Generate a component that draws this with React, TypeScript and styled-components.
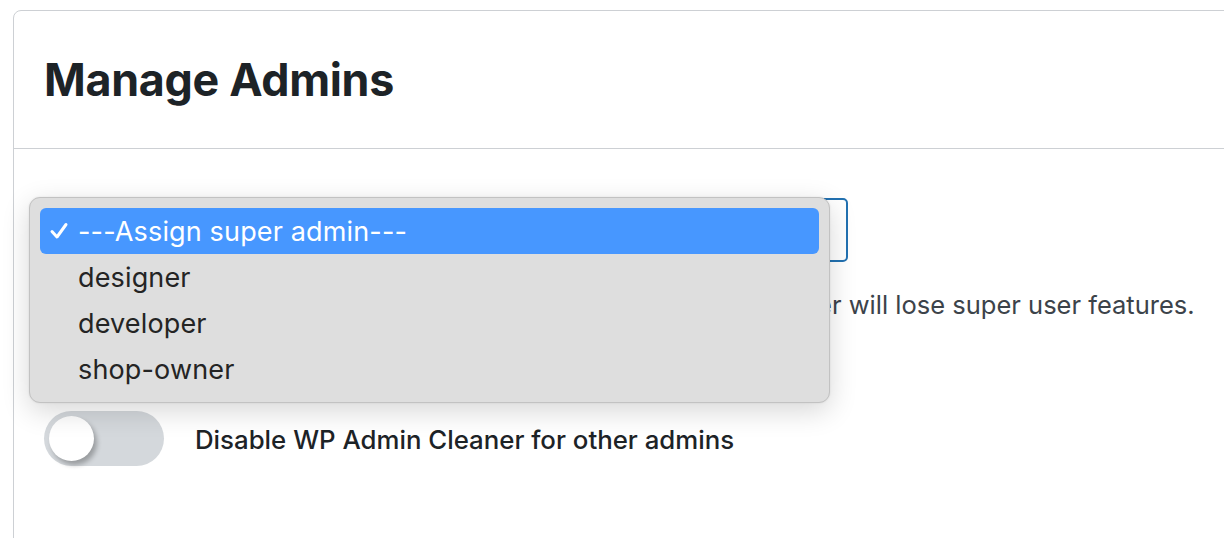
import React from "react";
import styled, { createGlobalStyle } from "styled-components";

const GlobalStyle = createGlobalStyle`
  html, body { margin: 0; padding: 0; background: #ffffff; }
  body { font-family: Inter, "Noto Sans", "Liberation Sans", sans-serif; overflow: hidden; }
  * { box-sizing: border-box; }
`;

const Page = styled.div`
  width: 1224px;
  height: 538px;
  padding: 10px 0 0 13px;
  overflow: hidden;
`;

const Card = styled.section`
  width: 1240px;
  min-height: 560px;
  border: 1.5px solid #cdd0d4;
  border-radius: 8px 0 0 0;
  background: #ffffff;
`;

const Header = styled.header`
  height: 138px;
  display: flex;
  align-items: center;
  padding: 0 0 0 30px;
  border-bottom: 1.5px solid #cdd0d4;
`;

const Title = styled.h1`
  margin: 0;
  font-size: 44.8px;
  font-weight: 700;
  color: #1d2327;
  letter-spacing: -0.3px;
`;

const Body = styled.div`
  padding: 49px 0 0 30px;
  display: flex;
  flex-direction: column;
`;

const SelectField = styled.div`
  position: relative;
  width: 804px;
`;

const SelectBox = styled.div`
  height: 64px;
  border: 2.5px solid #2271b1;
  border-radius: 5px;
  background: #ffffff;
`;

const Menu = styled.ul`
  position: absolute;
  left: -15px;
  top: -1px;
  width: 801px;
  margin: 0;
  padding: 10px 10px;
  list-style: none;
  background: #dedede;
  border: 1px solid #c2c2c2;
  border-radius: 11px;
  box-shadow: 0 8px 28px rgba(0, 0, 0, 0.16), 0 0 2px rgba(0, 0, 0, 0.1);
  z-index: 2;
`;

const MenuItem = styled.li<{ $active?: boolean }>`
  position: relative;
  height: 46px;
  display: flex;
  align-items: center;
  padding-left: 38px;
  padding-top: 1px;
  border-radius: 6px;
  font-family: Inter, "Noto Sans", sans-serif;
  font-size: 27px;
  font-weight: 400;
  letter-spacing: 0.15px;
  color: ${(p) => (p.$active ? "#ffffff" : "#242424")};
  background: ${(p) => (p.$active ? "#4797ff" : "transparent")};
`;

const Check = styled.span`
  position: absolute;
  left: 9px;
  top: 50%;
  transform: translateY(-50%);
  display: flex;
`;

const Description = styled.p`
  margin: 25px 0 0 0;
  font-size: 25.5px;
  line-height: 36px;
  color: #3c434a;
  white-space: nowrap;
`;

const ToggleRow = styled.label`
  margin-top: 88px;
  display: flex;
  align-items: center;
  gap: 31px;
`;

const Track = styled.span`
  position: relative;
  width: 120px;
  height: 55px;
  border-radius: 28px;
  background: #d4d8dc;
  flex-shrink: 0;
`;

const Knob = styled.span`
  position: absolute;
  left: 5px;
  top: 5px;
  width: 45px;
  height: 45px;
  border-radius: 50%;
  background: #ffffff;
  box-shadow: 3px 4px 5px rgba(0, 0, 0, 0.28);
`;

const ToggleLabel = styled.span`
  padding-top: 2px;
  font-size: 25.8px;
  font-weight: 500;
  color: #1d2327;
`;

const options = ["---Assign super admin---", "designer", "developer", "shop-owner"];

export default function App() {
  return (
    <>
      <GlobalStyle />
      <Page>
        <Card>
          <Header>
            <Title>Manage Admins</Title>
          </Header>
          <Body>
            <SelectField>
              <SelectBox />
              <Menu>
                {options.map((o, i) => (
                  <MenuItem key={o} $active={i === 0}>
                    {i === 0 && (
                      <Check>
                        <svg width="20" height="20" viewBox="0 0 20 20">
                          <path d="M3 10.5 L8 16 L17 3.5" fill="none" stroke="#ffffff" strokeWidth="3" strokeLinecap="round" strokeLinejoin="round" />
                        </svg>
                      </Check>
                    )}
                    {o}
                  </MenuItem>
                ))}
              </Menu>
            </SelectField>
            <Description>
              Choose the admin who keeps access to the plugin. Any other user will lose super user features.
            </Description>
            <ToggleRow>
              <Track>
                <Knob />
              </Track>
              <ToggleLabel>Disable WP Admin Cleaner for other admins</ToggleLabel>
            </ToggleRow>
          </Body>
        </Card>
      </Page>
    </>
  );
}
